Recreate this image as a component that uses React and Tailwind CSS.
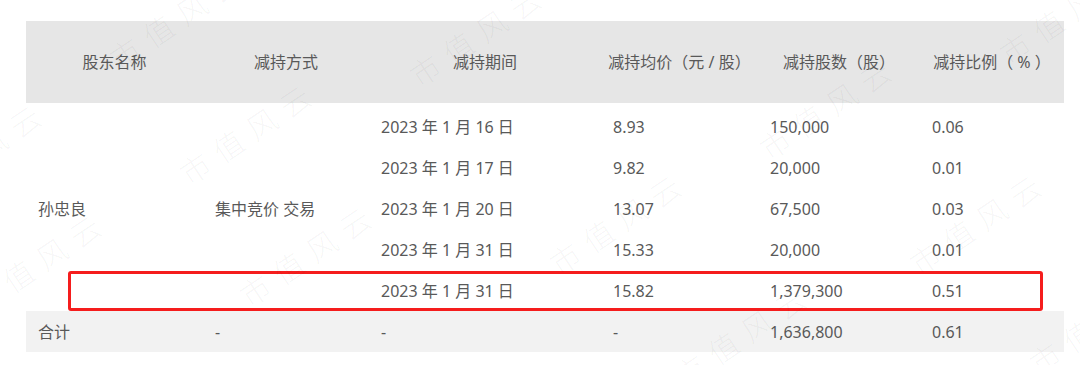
import React from 'react';

const cols = 'grid grid-cols-[177px_166px_232px_157px_162px_144px]';

const headers = ['股东名称', '减持方式', '减持期间', '减持均价（元 / 股）', '减持股数（股）', '减持比例（ % ）'];

const rows = [
  ['2023 年 1 月 16 日', '8.93', '150,000', '0.06'],
  ['2023 年 1 月 17 日', '9.82', '20,000', '0.01'],
  ['2023 年 1 月 20 日', '13.07', '67,500', '0.03'],
  ['2023 年 1 月 31 日', '15.33', '20,000', '0.01'],
  ['2023 年 1 月 31 日', '15.82', '1,379,300', '0.51'],
];

const total = ['合计', '-', '-', '-', '1,636,800', '0.61'];

// watermark stamps: left/top of first char, in page pixels
const marks = [
  { x: 125, y: 35 },
  { x: 425, y: 52 },
  { x: 1015, y: 30 },
  { x: 195, y: 150 },
  { x: 775, y: 125 },
  { x: -75, y: 170 },
  { x: 565, y: 240 },
  { x: 925, y: 240 },
  { x: -15, y: 280 },
  { x: 255, y: 272 },
  { x: 690, y: 352 },
  { x: 1045, y: 340 },
];

export default function App() {
  return (
    <div
      className="relative w-[1080px] h-[365px] bg-white overflow-hidden text-[16px] text-[#595959]"
      style={{ fontFamily: '"Noto Sans", "Noto Sans CJK SC", sans-serif' }}
    >
      <div className="relative ml-[26px] pt-[21px] w-[1038px]">
        {/* Header */}
        <div className={`${cols} h-[82px] bg-[#e6e6e6] items-center text-center`}>
          {headers.map((h) => (
            <div key={h} className="whitespace-pre">{h}</div>
          ))}
        </div>

        {/* Body */}
        <div className={`${cols} grid-rows-[repeat(5,41px)] mt-[3px]`}>
          <div className="row-span-5 flex items-center pl-3">孙忠良</div>
          <div className="row-span-5 flex items-center pl-3">集中竞价 交易</div>
          {rows.map((r, i) =>
            r.map((c, j) => (
              <div key={`${i}-${j}`} className="flex items-center pl-3">{c}</div>
            ))
          )}
        </div>

        {/* Total */}
        <div className={`${cols} h-[41px] bg-[#f2f2f2]`}>
          {total.map((c, j) => (
            <div key={j} className="flex items-center pl-3">{c}</div>
          ))}
        </div>

        {/* Highlight box */}
        <div className="absolute left-[42px] top-[271px] w-[975px] h-[40px] border-[3px] border-[#f51d1d] rounded-[3px]" />
      </div>

      {/* Watermark */}
      <div className="absolute inset-0 pointer-events-none">
        {marks.map((m, i) => (
          <span
            key={i}
            className="absolute origin-bottom-left -rotate-[34deg] whitespace-nowrap text-[30px] font-extralight tracking-[10px] text-black/[0.045]"
            style={{ left: m.x, top: m.y, fontFamily: '"Noto Sans CJK SC", serif' }}
          >
            市值风云
          </span>
        ))}
      </div>
    </div>
  );
}
